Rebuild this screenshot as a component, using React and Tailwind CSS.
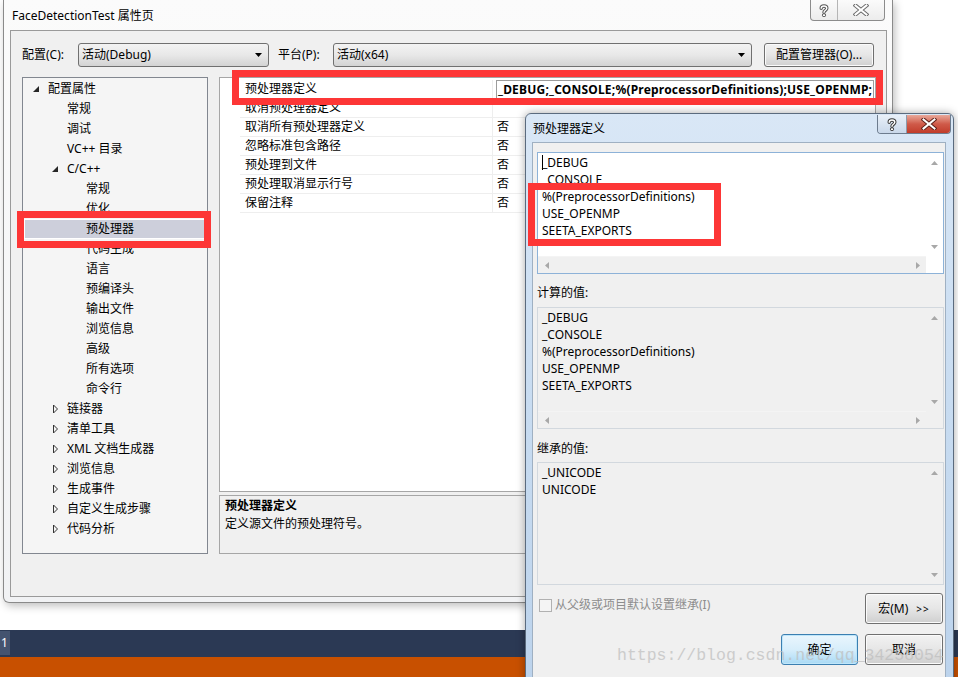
import React from 'react';

const treeRows = [
  ['配置属性', 0, 'open'],
  ['常规', 1],
  ['调试', 1],
  ['VC++ 目录', 1],
  ['C/C++', 1, 'open'],
  ['常规', 2],
  ['优化', 2],
  ['预处理器', 2, 'sel'],
  ['代码生成', 2],
  ['语言', 2],
  ['预编译头', 2],
  ['输出文件', 2],
  ['浏览信息', 2],
  ['高级', 2],
  ['所有选项', 2],
  ['命令行', 2],
  ['链接器', 1, 'closed'],
  ['清单工具', 1, 'closed'],
  ['XML 文档生成器', 1, 'closed'],
  ['浏览信息', 1, 'closed'],
  ['生成事件', 1, 'closed'],
  ['自定义生成步骤', 1, 'closed'],
  ['代码分析', 1, 'closed'],
];

const levelPad = ['pl-[10px]', 'pl-[29px]', 'pl-[48px]'];

const gridRows = [
  ['预处理器定义', '_DEBUG;_CONSOLE;%(PreprocessorDefinitions);USE_OPENMP;'],
  ['取消预处理器定义', ''],
  ['取消所有预处理器定义', '否'],
  ['忽略标准包含路径', '否'],
  ['预处理到文件', '否'],
  ['预处理取消显示行号', '否'],
  ['保留注释', '否'],
];

function Arrow({ kind }) {
  if (kind === 'open') {
    return (
      <svg width="15" height="8" viewBox="0 0 15 8">
        <polygon points="6,1 6,7 0,7" fill="#262626" />
      </svg>
    );
  }
  if (kind === 'closed') {
    return (
      <svg width="15" height="10" viewBox="0 0 15 10">
        <polygon points="1.5,1 5.5,5 1.5,9" fill="none" stroke="#333" strokeWidth="1" />
      </svg>
    );
  }
  return <span className="inline-block w-[15px]" />;
}

function DropArrow() {
  return (
    <svg width="8" height="5" viewBox="0 0 8 5">
      <polygon points="0,0 7,0 3.5,4" fill="#000" />
    </svg>
  );
}

function Combo({ text, w }) {
  return (
    <div className={`${w} h-[24px] flex items-center justify-between pl-[3px] pr-[5px] rounded-[3px] border border-[#707070] bg-linear-to-b from-[#f3f3f3] via-[#e8e8e8] to-[#d3d3d3]`}>
      <span className="leading-[16px]">{text}</span>
      <DropArrow />
    </div>
  );
}

function ScrollTri({ dir }) {
  const pts = {
    up: '0,4 3.5,0 7,4',
    down: '0,0 7,0 3.5,4',
    left: '4,0 4,7 0,3.5',
    right: '0,0 0,7 4,3.5',
  }[dir];
  const vertical = dir === 'up' || dir === 'down';
  return (
    <svg width={vertical ? 7 : 4} height={vertical ? 4 : 7} viewBox={vertical ? '0 0 7 4' : '0 0 4 7'}>
      <polygon points={pts} fill="#a8a8a8" />
    </svg>
  );
}

function ListBox({ lines, focused, hScroll, caret, h }) {
  return (
    <div className={`${h} flex flex-col border ${focused ? 'border-[#8db2d8] bg-white' : 'border-[#d2d8de] bg-[#f0f0f0]'}`}>
      <div className="flex flex-1 min-h-0">
        <div className="flex-1 pl-[4px] pt-[1px] leading-[17px] text-[12px] text-black">
          {lines.map((l, i) => (
            <div key={i} className="relative whitespace-nowrap">
              {caret && i === 0 && <span className="absolute left-[0px] top-[1px] h-[15px] w-[1px] bg-black" />}
              {l}
            </div>
          ))}
        </div>
        <div className={`w-[17px] flex flex-col items-center justify-between pt-[8px] pb-[7px] ${focused ? 'bg-white' : 'bg-[#f0f0f0]'}`}>
          <ScrollTri dir="up" />
          <ScrollTri dir="down" />
        </div>
      </div>
      {hScroll && (
        <div className="h-[17px] flex">
          <div className="flex-1 flex items-center justify-between pl-[7px] pr-[6px] bg-[#f0f0f0] border-t border-[#f4f4f4]">
            <ScrollTri dir="left" />
            <ScrollTri dir="right" />
          </div>
          <div className={`w-[17px] ${focused ? 'bg-white' : 'bg-[#f0f0f0]'}`} />
        </div>
      )}
    </div>
  );
}

function Btn({ children, w, primary }) {
  return (
    <div
      className={`${w} h-[31px] flex items-center justify-center rounded-[3px] border text-[12px] leading-[16px] ${
        primary
          ? 'border-[#3c7fb1] bg-linear-to-b from-[#eaf6fd] via-[#d7eefb] to-[#a9daf5] shadow-[inset_0_0_0_1px_#bfe6fa]'
          : 'border-[#707070] bg-linear-to-b from-[#f2f2f2] via-[#e6e6e6] to-[#cfcfcf] shadow-[inset_0_0_0_1px_#fbfbfb]'
      }`}
    >
      {children}
    </div>
  );
}

function QIcon({ dark }) {
  return (
    <svg width="12" height="13" viewBox="0 0 12 13">
      <path d="M3.2 4.3 C3.2 1.2 8.8 1.2 8.8 4.3 C8.8 6.3 6 6.3 6 8.3" fill="none" stroke={dark ? '#3a3a3a' : '#555'} strokeWidth="3.4" strokeLinecap="round" />
      <path d="M3.2 4.3 C3.2 1.2 8.8 1.2 8.8 4.3 C8.8 6.3 6 6.3 6 8.3" fill="none" stroke="#fff" strokeWidth="1.4" strokeLinecap="round" />
      <circle cx="6" cy="11.2" r="1.6" fill="#fff" stroke={dark ? '#3a3a3a' : '#555'} strokeWidth="1" />
    </svg>
  );
}

function XIcon({ outline, fill }) {
  return (
    <svg width="16" height="12" viewBox="0 0 16 12">
      <path d="M2.5 1.5 L13.5 10.5 M13.5 1.5 L2.5 10.5" stroke={outline} strokeWidth="4" strokeLinecap="square" />
      <path d="M2.5 1.5 L13.5 10.5 M13.5 1.5 L2.5 10.5" stroke={fill} strokeWidth="2" strokeLinecap="square" />
    </svg>
  );
}

export default function App() {
  return (
    <div className="relative w-[958px] h-[677px] overflow-hidden bg-white flex flex-col font-['Noto_Sans','Noto_Sans_CJK_SC',sans-serif] text-[12px] text-black">
      {/* desktop */}
      <div className="flex-1" />
      <div className="h-[27px] bg-[#2b3954] flex">
        <div className="w-[10px] h-[24px] mt-[1px] bg-[#44536f] text-white text-[12px] leading-[24px] pl-[1px]">1</div>
      </div>
      <div className="h-[20px] bg-[#c85000]" />

      {/* main property window */}
      <div className="absolute left-[3px] top-0 w-[890px] h-[603px] rounded-b-[6px] border border-t-0 border-[#8a8a8a] bg-linear-to-b from-[#fbfbfb] to-[#f1f2f4] pl-[6px] pr-[5px] pt-[30px] pb-[5px] shadow-[2px_3px_8px_rgba(0,0,0,0.25)]">
        <div className="absolute left-[8px] top-[8px] leading-[16px] text-[12px]">FaceDetectionTest 属性页</div>
        <div className="absolute top-0 right-[7px] flex border border-t-0 border-[#8c8c8c] rounded-b-[4px] overflow-hidden bg-linear-to-b from-[#fbfbfb] to-[#ececec]">
          <div className="w-[27px] h-[20px] flex items-center justify-center border-r border-[#b5b5b5]">
            <QIcon />
          </div>
          <div className="w-[46px] h-[20px] flex items-center justify-center">
            <XIcon outline="#6a6a6a" fill="#fff" />
          </div>
        </div>

        <div className="h-full border border-[#9a9a9a] bg-[#f0f0f0] pl-[11px] pr-[10px] pt-[12px] flex flex-col">
          {/* config row */}
          <div className="h-[24px] flex items-center">
            <div className="w-[56px] leading-[16px]">配置(C):</div>
            <Combo text="活动(Debug)" w="w-[191px]" />
            <div className="w-[55px] ml-[9px] leading-[16px]">平台(P):</div>
            <Combo text="活动(x64)" w="w-[419px]" />
            <div className="ml-[12px] w-[110px] h-[24px] flex items-center justify-center rounded-[3px] border border-[#707070] bg-linear-to-b from-[#f2f2f2] via-[#e6e6e6] to-[#d0d0d0] shadow-[inset_0_0_0_1px_#fbfbfb] leading-[16px]">
              配置管理器(O)...
            </div>
          </div>

          {/* panels */}
          <div className="mt-[10px] h-[477px] flex gap-[11px]">
            {/* tree */}
            <div className="w-[186px] h-full border border-[#828790] bg-[#f5f5f5] pt-[1px] flex flex-col">
              {treeRows.map(([label, level, kind], i) => (
                <div
                  key={i}
                  className={`h-[20px] shrink-0 flex items-center ${
                    kind === 'sel' ? 'pl-[46px] mx-[1px] bg-[#cdcfdb] border border-white' : levelPad[level]
                  }`}
                >
                  <Arrow kind={kind === 'open' || kind === 'closed' ? kind : null} />
                  <span className="leading-[16px] whitespace-nowrap">{label}</span>
                </div>
              ))}
            </div>

            {/* grid + description */}
            <div className="flex-1 flex flex-col gap-[3px]">
              <div className="h-[415px] border border-[#a6a6a6] bg-white pt-[2px]">
                {gridRows.map(([name, val], i) => (
                  <div key={i} className="h-[19px] flex">
                    <div className="w-[20px]" />
                    <div className="w-[253px] flex items-center pl-[5px] border-b border-r border-[#eeeeee] leading-[16px] whitespace-nowrap">
                      {name}
                    </div>
                    {i === 0 ? (
                      <div className="flex-1 flex items-center pl-[3px] pr-[1px]">
                        <div className="w-full h-[19px] flex items-center pl-[1px] border border-[#9c9c9c] bg-white font-bold leading-[16px] whitespace-nowrap overflow-hidden tracking-[0.2px]">
                          {val}
                        </div>
                      </div>
                    ) : (
                      <div className="flex-1 flex items-center pl-[4px] border-b border-[#eeeeee] leading-[16px]">{val}</div>
                    )}
                  </div>
                ))}
              </div>
              <div className="h-[59px] border border-[#a6a6a6] bg-[#f0f0f0] pl-[5px] pt-[1px] leading-[18px]">
                <div className="font-bold">预处理器定义</div>
                <div>定义源文件的预处理符号。</div>
              </div>
            </div>
          </div>
        </div>
      </div>

      {/* red highlight annotations on main window */}
      <div className="absolute left-[17px] top-[211px] w-[194px] h-[37px] border-[7px] border-[#fd3636]" />
      <div className="absolute left-[232px] top-[70px] w-[651px] h-[35px] border-[7px] border-[#fd3636]" />

      {/* dialog */}
      <div className="absolute left-[525px] top-[113px] w-[429px] h-[578px] rounded-t-[6px] border border-[#5b6b7e] bg-linear-to-b from-[#d9e7f6] via-[#c8dcf1] to-[#bcd3ec] shadow-[0_0_8px_rgba(0,0,0,0.35)] pl-[6px] pr-[7px] pt-[28px] flex flex-col">
        <div className="absolute left-[7px] top-[7px] leading-[16px] text-[12px]">预处理器定义</div>
        <div className="absolute top-[1px] right-[2px] flex rounded-b-[4px] overflow-hidden border border-t-0 border-[#6d7c8e]">
          <div className="w-[29px] h-[18px] flex items-center justify-center border-r border-[#8c9aab] bg-linear-to-b from-[#e9f0f8] to-[#c9d8ea]">
            <QIcon dark />
          </div>
          <div className="w-[43px] h-[18px] flex items-center justify-center bg-linear-to-b from-[#e8a89a] via-[#cf5a49] to-[#c13c2a]">
            <XIcon outline="#5a1f18" fill="#fff" />
          </div>
        </div>

        <div className="flex-1 border border-[#9fb0c2] bg-[#f0f0f0] pl-[4px] pr-[1px] flex flex-col">
          <div className="mt-[9px]">
            <ListBox
              h="h-[122px]"
              focused
              hScroll
              caret
              lines={['_DEBUG', '_CONSOLE', '%(PreprocessorDefinitions)', 'USE_OPENMP', 'SEETA_EXPORTS']}
            />
          </div>
          <div className="h-[33px] pt-[11px] leading-[16px]">计算的值:</div>
          <ListBox
            h="h-[122px]"
            hScroll
            lines={['_DEBUG', '_CONSOLE', '%(PreprocessorDefinitions)', 'USE_OPENMP', 'SEETA_EXPORTS']}
          />
          <div className="h-[33px] pt-[12px] leading-[16px]">继承的值:</div>
          <ListBox h="h-[123px]" lines={['_UNICODE', 'UNICODE']} />

          <div className="mt-[8px] h-[30px] flex items-start justify-between pr-[1px]">
            <div className="flex items-center gap-[3px] pl-[2px] pt-[4px]">
              <div className="w-[13px] h-[13px] border border-[#b1b1b1] bg-[#f4f4f4]" />
              <span className="text-[#8d8d8d] leading-[16px]">从父级或项目默认设置继承(I)</span>
            </div>
            <Btn w="w-[78px]">
              <span>宏(M)</span>
              <span className="ml-[8px] text-[10px] tracking-[1px]">&gt;&gt;</span>
            </Btn>
          </div>
          <div className="mt-[11px] flex justify-end gap-[7px] pr-[1px]">
            <Btn w="w-[77px]" primary>确定</Btn>
            <Btn w="w-[78px]">取消</Btn>
          </div>
        </div>
      </div>

      {/* red highlight annotation on dialog */}
      <div className="absolute left-[528px] top-[183px] w-[193px] h-[63px] border-[7px] border-[#fd3636]" />

      {/* watermark */}
      <div className="absolute left-[617px] top-[645px] text-[16.5px] leading-[22px] font-['Liberation_Mono',monospace] text-[#bdbdbd] opacity-70 pointer-events-none whitespace-nowrap">
        https://blog.csdn.net/qq_34258054
      </div>
    </div>
  );
}
